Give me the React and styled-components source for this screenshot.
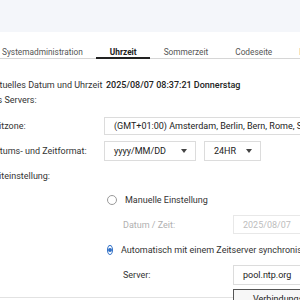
import React from "react";
import styled, { createGlobalStyle } from "styled-components";

const GlobalStyle = createGlobalStyle`
  html, body {
    margin: 0;
    padding: 0;
    background: #ffffff;
    overflow: hidden;
  }
  body {
    font-family: Roboto, "Liberation Sans", sans-serif;
    font-size: 9px;
    color: #333333;
  }
`;

const Page = styled.div`
  position: relative;
  width: 300px;
  height: 300px;
  overflow: hidden;
`;

const TopBand = styled.div`
  height: 32px;
  background: #f4f6fa;
`;

const TabBar = styled.div`
  display: flex;
  margin-left: -11.5px;
  padding-top: 15px;
  border-bottom: 1px solid #d6d6d6;
  white-space: nowrap;
`;

const Tab = styled.div`
  padding: 0 13.5px;
  font-size: 8.3px;
  line-height: 10px;
  color: ${(p) => (p.$active ? "#222222" : "#555555")};
  font-weight: ${(p) => (p.$active ? 700 : 400)};
  border-bottom: 2px solid ${(p) => (p.$active ? "#222222" : "transparent")};
  margin-bottom: -1px;
`;

const Form = styled.div`
  display: flex;
  flex-direction: column;
  margin-left: -11px;
  padding-top: 18px;
`;

const Row = styled.div`
  display: grid;
  grid-template-columns: 115px 1fr;
  align-items: center;
  height: ${(p) => p.$h}px;
  margin-top: ${(p) => p.$mt || 0}px;
  white-space: nowrap;
`;

const Label = styled.div`
  color: #333333;
  white-space: nowrap;
`;

const Value = styled.div`
  padding-left: 2px;
  color: #222222;
  font-weight: 500;
`;

const Heading = styled.div`
  height: ${(p) => p.$h}px;
  line-height: ${(p) => p.$h}px;
  margin-left: -38px;
  white-space: nowrap;
`;

const Controls = styled.div`
  display: flex;
  gap: 8px;
`;

const Select = styled.div`
  display: flex;
  align-items: center;
  justify-content: space-between;
  box-sizing: border-box;
  width: ${(p) => p.$w}px;
  height: ${(p) => p.$h}px;
  padding: 0 8px 0 9px;
  border: 1px solid #dcdcdc;
  background: #ffffff;
  color: #222222;
  overflow: hidden;
`;

const Caret = styled.span`
  width: 0;
  height: 0;
  border-left: 3px solid transparent;
  border-right: 3px solid transparent;
  border-top: 4px solid #444444;
  flex-shrink: 0;
`;

const Option = styled.div`
  display: flex;
  align-items: center;
  gap: 8px;
  height: ${(p) => p.$h}px;
  margin-top: ${(p) => p.$mt || 0}px;
  padding-left: 118px;
  white-space: nowrap;
  color: #333333;
`;

const Radio = styled.span`
  box-sizing: border-box;
  width: 10px;
  height: 10px;
  border-radius: 50%;
  border: 1px solid ${(p) => (p.$checked ? "#2f6fc6" : "#9a9a9a")};
  display: flex;
  align-items: center;
  justify-content: center;
  background: #fff;
  &::after {
    content: "";
    width: 4px;
    height: 4px;
    border-radius: 50%;
    background: ${(p) => (p.$checked ? "#2f6fc6" : "transparent")};
  }
`;

const SubRow = styled.div`
  display: grid;
  grid-template-columns: 110px 1fr;
  align-items: center;
  height: ${(p) => p.$h}px;
  margin-top: ${(p) => p.$mt || 0}px;
  padding-left: 134px;
  white-space: nowrap;
`;

const SubLabel = styled.div`
  color: ${(p) => (p.$disabled ? "#b0b0b0" : "#333333")};
`;

const Input = styled.div`
  box-sizing: border-box;
  width: 90px;
  height: ${(p) => p.$h}px;
  display: flex;
  align-items: center;
  padding-left: 9px;
  border: 1px solid ${(p) => (p.$disabled ? "#e8e8e8" : "#dcdcdc")};
  color: ${(p) => (p.$disabled ? "#bdbdbd" : "#222222")};
`;

const ButtonRow = styled.div`
  margin-top: 4px;
  padding-left: 244px;
  position: relative;
  z-index: 1;
`;

const Button = styled.button`
  display: block;
  box-sizing: border-box;
  width: 110px;
  height: 20px;
  padding: 0 0 0 19px;
  text-align: left;
  font-family: inherit;
  font-size: 9px;
  color: #222222;
  background: #f7f7f7;
  border: 1px solid #555555;
  white-space: nowrap;
`;

const BottomLine = styled.div`
  position: absolute;
  left: 0;
  right: 0;
  top: 297px;
  height: 1px;
  background: #e2e2e2;
`;

export default function App() {
  return (
    <Page>
      <GlobalStyle />
      <TopBand />
      <TabBar>
        <Tab>Systemadministration</Tab>
        <Tab $active>Uhrzeit</Tab>
        <Tab>Sommerzeit</Tab>
        <Tab>Codeseite</Tab>
        <Tab>FTP</Tab>
      </TabBar>
      <Form>
        <Row $h={16}>
          <Label>Aktuelles Datum und Uhrzeit</Label>
          <Value>2025/08/07 08:37:21 Donnerstag</Value>
        </Row>
        <Heading $h={14}>Zeitzone des Servers:</Heading>
        <Row $h={18} $mt={10}>
          <Label>Zeitzone:</Label>
          <Select $w={260} $h={18}>
            <span>(GMT+01:00) Amsterdam, Berlin, Bern, Rome, Stockholm, Vienna</span>
          </Select>
        </Row>
        <Row $h={20} $mt={6}>
          <Label>Datums- und Zeitformat:</Label>
          <Controls>
            <Select $w={92} $h={20}>
              <span>yyyy/MM/DD</span>
              <Caret />
            </Select>
            <Select $w={57} $h={20}>
              <span>24HR</span>
              <Caret />
            </Select>
          </Controls>
        </Row>
        <Row $h={14} $mt={8}>
          <Label>Zeiteinstellung:</Label>
          <span />
        </Row>
        <Option $h={16} $mt={9}>
          <Radio />
          <span>Manuelle Einstellung</span>
        </Option>
        <SubRow $h={19} $mt={7}>
          <SubLabel $disabled>Datum / Zeit:</SubLabel>
          <Input $h={19} $disabled>2025/08/07</Input>
        </SubRow>
        <Option $h={16} $mt={8}>
          <Radio $checked />
          <span>Automatisch mit einem Zeitserver synchronisieren</span>
        </Option>
        <SubRow $h={20} $mt={7}>
          <SubLabel>Server:</SubLabel>
          <Input $h={20}>pool.ntp.org</Input>
        </SubRow>
        <ButtonRow>
          <Button>Verbindungstest</Button>
        </ButtonRow>
      </Form>
      <BottomLine />
    </Page>
  );
}
